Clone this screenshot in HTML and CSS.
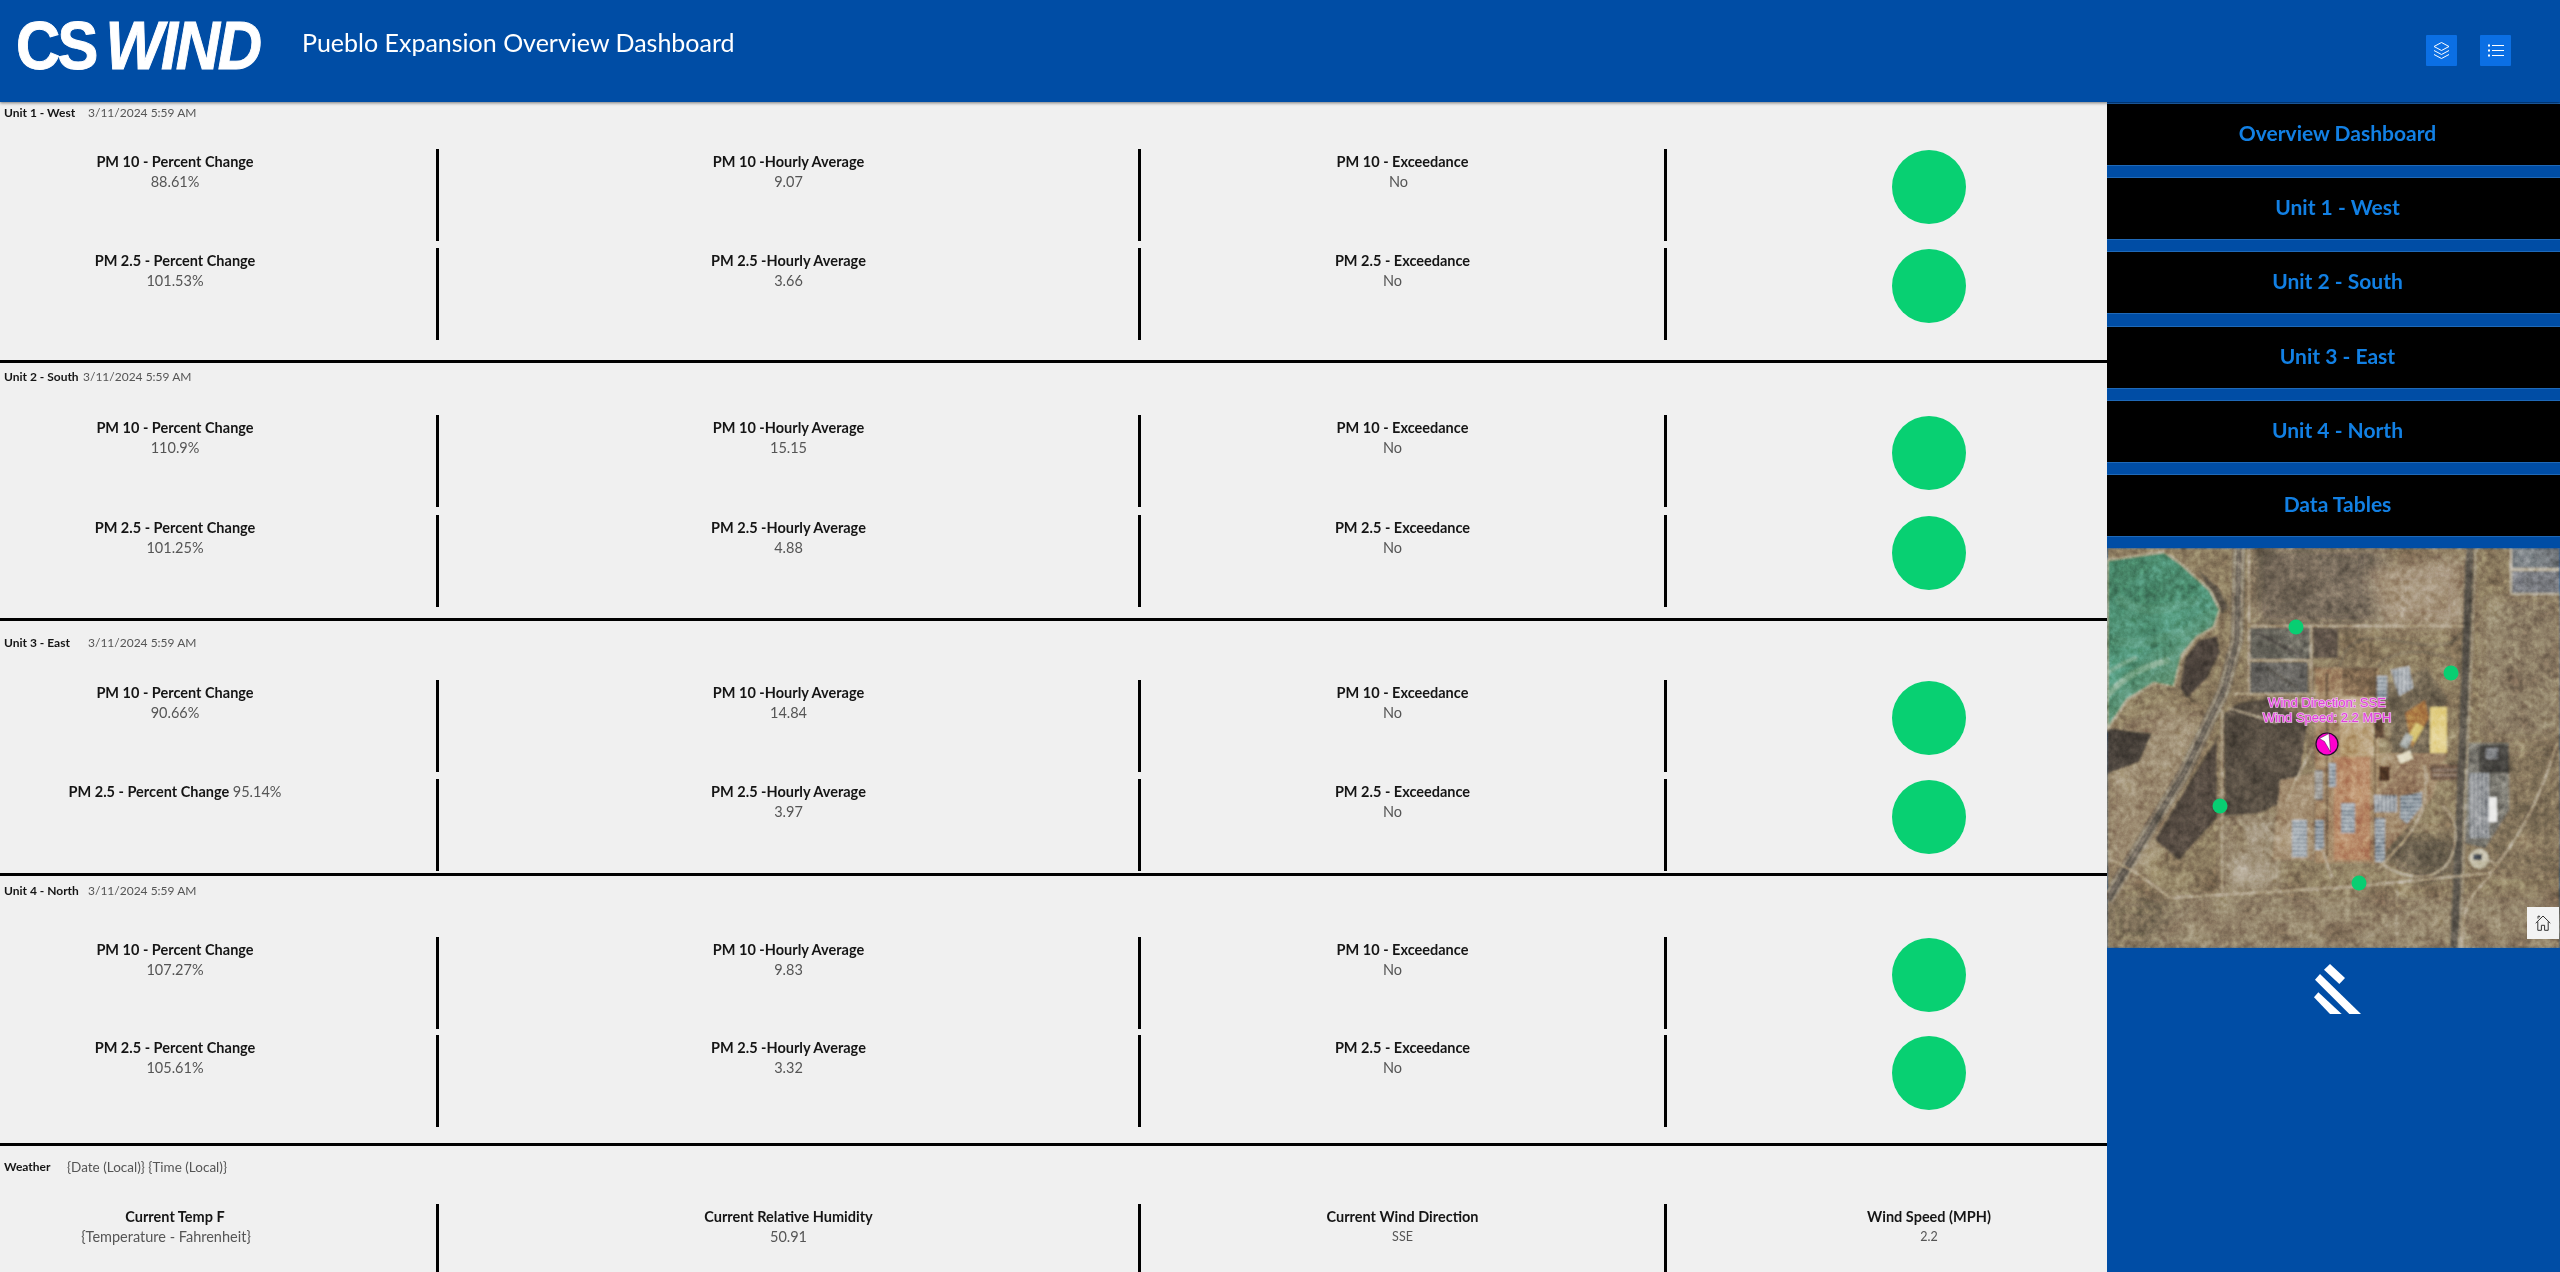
FILE: index.html
```html
<!DOCTYPE html>
<html>
<head>
<title>Pueblo Expansion Overview Dashboard</title>
<meta http-equiv="content-type" content="text/html; charset=utf-8">
<link rel="stylesheet" href="styles.css">
</head>
<body>

<header class="topbar">
	<div class="logo"><span class="logo-cs">CS</span><span class="logo-wind">WIND</span></div>
	<div class="app-title">Pueblo Expansion Overview Dashboard</div>
	<div class="top-actions">
		<button class="top-btn" type="button">
			<svg viewBox="0 0 31 31" width="31" height="31" fill="none" stroke="#fff" stroke-width="1">
				<path d="M8 11.5 15.5 7.5 23 11.5 15.5 15.5Z"/>
				<path d="M8 15.5 15.5 19.5 23 15.5"/>
				<path d="M8 19.5 15.5 23.5 23 19.5"/>
			</svg>
		</button>
		<button class="top-btn" type="button">
			<svg viewBox="0 0 31 31" width="31" height="31" fill="none" stroke="#fff" stroke-width="1">
				<path d="M12 10.5H24M12 15.5H24M12 20.5H24"/>
				<path d="M8 9.5h2v2h-2zM8 14.5h2v2h-2zM8 19.5h2v2h-2z" fill="#fff" stroke="none"/>
			</svg>
		</button>
	</div>
</header>

<div class="main">
	<div class="panels">

		<section class="unit u1">
			<div class="unit-head"><b>Unit 1 - West</b><span class="stamp">3/11/2024 5:59 AM</span></div>
			<div class="row">
				<div class="cell first"><h4>PM 10 - Percent Change</h4><p>88.61%</p></div>
				<div class="cell"><h4>PM 10 -Hourly Average</h4><p>9.07</p></div>
				<div class="cell"><h4>PM 10 - Exceedance</h4><p class="no-a">No</p></div>
				<div class="cell last"><span class="dot"></span></div>
			</div>
			<div class="row">
				<div class="cell first"><h4>PM 2.5 - Percent Change</h4><p>101.53%</p></div>
				<div class="cell"><h4>PM 2.5 -Hourly Average</h4><p>3.66</p></div>
				<div class="cell"><h4>PM 2.5 - Exceedance</h4><p class="no-b">No</p></div>
				<div class="cell last"><span class="dot"></span></div>
			</div>
		</section>

		<section class="unit u2">
			<div class="unit-head"><b>Unit 2 - South</b><span class="stamp">3/11/2024 5:59 AM</span></div>
			<div class="row">
				<div class="cell first"><h4>PM 10 - Percent Change</h4><p>110.9%</p></div>
				<div class="cell"><h4>PM 10 -Hourly Average</h4><p>15.15</p></div>
				<div class="cell"><h4>PM 10 - Exceedance</h4><p class="no-b">No</p></div>
				<div class="cell last"><span class="dot"></span></div>
			</div>
			<div class="row">
				<div class="cell first"><h4>PM 2.5 - Percent Change</h4><p>101.25%</p></div>
				<div class="cell"><h4>PM 2.5 -Hourly Average</h4><p>4.88</p></div>
				<div class="cell"><h4>PM 2.5 - Exceedance</h4><p class="no-b">No</p></div>
				<div class="cell last"><span class="dot"></span></div>
			</div>
		</section>

		<section class="unit u3">
			<div class="unit-head"><b>Unit 3 - East</b><span class="stamp">3/11/2024 5:59 AM</span></div>
			<div class="row">
				<div class="cell first"><h4>PM 10 - Percent Change</h4><p>90.66%</p></div>
				<div class="cell"><h4>PM 10 -Hourly Average</h4><p>14.84</p></div>
				<div class="cell"><h4>PM 10 - Exceedance</h4><p class="no-b">No</p></div>
				<div class="cell last"><span class="dot"></span></div>
			</div>
			<div class="row">
				<div class="cell first"><h4>PM 2.5 - Percent Change <span>95.14%</span></h4></div>
				<div class="cell"><h4>PM 2.5 -Hourly Average</h4><p>3.97</p></div>
				<div class="cell"><h4>PM 2.5 - Exceedance</h4><p class="no-b">No</p></div>
				<div class="cell last"><span class="dot"></span></div>
			</div>
		</section>

		<section class="unit u4">
			<div class="unit-head"><b>Unit 4 - North</b><span class="stamp">3/11/2024 5:59 AM</span></div>
			<div class="row">
				<div class="cell first"><h4>PM 10 - Percent Change</h4><p>107.27%</p></div>
				<div class="cell"><h4>PM 10 -Hourly Average</h4><p>9.83</p></div>
				<div class="cell"><h4>PM 10 - Exceedance</h4><p class="no-b">No</p></div>
				<div class="cell last"><span class="dot"></span></div>
			</div>
			<div class="row">
				<div class="cell first"><h4>PM 2.5 - Percent Change</h4><p>105.61%</p></div>
				<div class="cell"><h4>PM 2.5 -Hourly Average</h4><p>3.32</p></div>
				<div class="cell"><h4>PM 2.5 - Exceedance</h4><p class="no-b">No</p></div>
				<div class="cell last"><span class="dot"></span></div>
			</div>
		</section>

		<section class="unit u5">
			<div class="unit-head"><b>Weather</b><span class="stamp">{Date (Local)} {Time (Local)}</span></div>
			<div class="row">
				<div class="cell first"><h4>Current Temp F</h4><p class="tpl">{Temperature - Fahrenheit}</p></div>
				<div class="cell"><h4>Current Relative Humidity</h4><p>50.91</p></div>
				<div class="cell"><h4>Current Wind Direction</h4><p class="small">SSE</p></div>
				<div class="cell last"><h4>Wind Speed (MPH)</h4><p class="small">2.2</p></div>
			</div>
		</section>

	</div>

	<aside class="side">
		<nav class="side-nav">
			<a>Overview Dashboard</a>
			<a>Unit 1 - West</a>
			<a>Unit 2 - South</a>
			<a>Unit 3 - East</a>
			<a>Unit 4 - North</a>
			<a>Data Tables</a>
		</nav>

		<div class="map">
			<svg class="map-img" viewBox="0 0 453 400" width="453" height="400">
				<defs>
					<filter id="soft" x="-2%" y="-2%" width="104%" height="104%"><feGaussianBlur stdDeviation="0.9"/></filter>
					<filter id="softer"><feGaussianBlur stdDeviation="7"/></filter>
					<filter id="speckle" x="0" y="0" width="100%" height="100%" color-interpolation-filters="sRGB">
						<feTurbulence type="fractalNoise" baseFrequency="0.16" numOctaves="4" seed="7"/>
						<feColorMatrix type="matrix" values="1 1 0 0 -0.5  1 1 0 0 -0.5  1 1 0 0 -0.5  0 0 0 0 1"/>
					</filter>
					<filter id="patches" x="0" y="0" width="100%" height="100%" color-interpolation-filters="sRGB">
						<feTurbulence type="fractalNoise" baseFrequency="0.035" numOctaves="3" seed="21"/>
						<feColorMatrix type="matrix" values="1 1 0 0 -0.5  1 1 0 0 -0.5  1 1 0 0 -0.5  0 0 0 0 1"/>
					</filter>
					<linearGradient id="lake" x1="0.1" y1="0" x2="0.6" y2="1">
						<stop offset="0" stop-color="#4a8a6c"/>
						<stop offset="0.55" stop-color="#4f9074"/>
						<stop offset="1" stop-color="#86a98e"/>
					</linearGradient>
					<pattern id="rows" width="6" height="4" patternUnits="userSpaceOnUse">
						<rect width="6" height="4" fill="#78818a"/>
						<rect width="6" height="2" fill="#bcc5cc"/>
					</pattern>
					<pattern id="rowsv" width="4" height="6" patternUnits="userSpaceOnUse">
						<rect width="4" height="6" fill="#7a8086"/>
						<rect width="2" height="6" fill="#b9c0c6"/>
					</pattern>
				</defs>

				<g filter="url(#soft)">
					<rect width="453" height="400" fill="#8c7b60"/>

					<!-- ground tones -->
					<g filter="url(#softer)">
						<rect x="150" y="0" width="130" height="76" fill="#75695a"/>
						<path d="M260 20 357 10V78H275Z" fill="#a5937a"/>
						<rect x="0" y="350" width="453" height="50" fill="#93836a"/>
						<rect x="375" y="200" width="78" height="120" fill="#7f7059"/>
						<rect x="375" y="50" width="78" height="140" fill="#8d7e66"/>
						<path d="M0 190 60 160 100 170 60 290 20 340 0 320Z" fill="#9b8a70"/>
						<path d="M120 270 170 270 170 340 120 340Z" fill="#a59780"/>
						<path d="M280 290 350 290 350 330 290 330Z" fill="#6a604f"/>
						<path d="M0 350 70 355 40 400 0 400Z" fill="#7c6e58"/>
					</g>

					<!-- dark scrub -->
					<path d="M117 165 132 155 165 150 200 178 193 225 180 252 153 265 118 268Z" fill="#574e42"/>
					<path d="M110 190 110 270 72 312 48 292 88 225Z" fill="#534a3f"/>
					<path d="M110 88 113 105 100 130 80 150 73 140 78 110 92 92Z" fill="#4b433b"/>
					<path d="M0 180 45 186 32 214 0 226Z" fill="#4a433a"/>
					<path d="M92 22 112 40 122 60 112 66 100 42Z" fill="#5a5144"/>
					<path d="M150 5 205 0 225 40 160 60Z" fill="#6f6454" opacity=".7"/>

					<!-- lake -->
					<path d="M0 12 57 4 73 15 103 42 113 62 107 79 90 89 75 107 67 139 47 135 20 152 0 182Z" fill="url(#lake)" stroke="#b9ac90" stroke-width="2"/>
					<path d="M0 148C20 125 40 118 62 112" fill="none" stroke="#a9c2a5" stroke-width="6" opacity=".5"/>
					<path d="M10 50C40 70 60 60 92 52M5 92C35 100 55 90 82 82" fill="none" stroke="#63a083" stroke-width="9" opacity=".45"/>
					<path d="M0 125C12 118 20 112 30 110" fill="none" stroke="#a9c2a5" stroke-width="4" opacity=".4"/>

					<!-- fields -->
					<rect x="143" y="80" width="60" height="31" fill="#6b675f"/>
					<rect x="143" y="114" width="58" height="31" fill="#62605b"/>
					<rect x="206" y="80" width="25" height="30" fill="#62564b"/>
					<path d="M150 85 195 108M160 120 190 140" stroke="#56534d" stroke-width="3" fill="none"/>

					<!-- site -->
					<rect x="208" y="120" width="64" height="195" fill="#a58a6b"/>
					<rect x="235" y="120" width="35" height="29" fill="#7f6750"/>
					<rect x="233" y="149" width="34" height="60" fill="#bda682"/>
					<rect x="227" y="209" width="36" height="103" fill="#b98b69"/>
					<path d="M173 232 207 225V312H165Z" fill="#a69174"/>
					<path d="M272 205 340 205 325 250 290 290 272 312Z" fill="#9d8467"/>
					<path d="M280 135 320 120 340 150 322 205 285 205Z" fill="#766a56"/>
					<path d="M298 165 318 152 322 170 305 200Z" fill="#b5793f" opacity=".8"/>
					<path d="M220 125V310M268 120V310" stroke="#6d5a45" stroke-width="2" fill="none"/>
					<rect x="272" y="218" width="11" height="15" fill="#4a3122"/>
					<rect x="268" y="172" width="9" height="18" fill="#574330"/>

					<!-- roofs -->
					<rect x="323" y="159" width="17" height="46" fill="#e4d28e"/>
					<rect x="185" y="272" width="15" height="37" fill="url(#rows)"/>
					<rect x="267" y="247" width="23" height="17" fill="url(#rowsv)"/>
					<path d="M293 248 315 244V258L300 276 293 270Z" fill="url(#rows)"/>
					<rect x="270" y="128" width="10" height="24" fill="url(#rows)"/>
					<path d="M284 122 302 118 306 140 292 148Z" fill="url(#rowsv)"/>
					<rect x="222" y="215" width="7" height="24" fill="url(#rows)"/>
					<rect x="208" y="272" width="9" height="30" fill="url(#rows)"/>
					<rect x="234" y="255" width="14" height="30" fill="url(#rows)"/>
					<rect x="268" y="270" width="10" height="44" fill="url(#rows)"/>
					<rect x="208" y="222" width="8" height="30" fill="url(#rows)" opacity=".7"/>
					<rect x="291" y="205" width="14" height="9" fill="#e5dfc8" transform="rotate(-25 297 209)"/>
					<rect x="304" y="175" width="9" height="18" fill="#d9c674" transform="rotate(30 308 184)"/>
					<rect x="296" y="186" width="8" height="14" fill="#aab0ae" transform="rotate(30 300 192)"/>
					<rect x="323" y="216" width="28" height="16" fill="#6f5a4a"/>
					<path d="M326 222H350M326 227H350" stroke="#b6a899" stroke-width="1"/>

					<!-- plant on the east side -->
					<path d="M360 195 402 195V262L378 300 358 295Z" fill="#7f7d75"/>
					<path d="M362 225H382V290H362Z" fill="url(#rowsv)" opacity=".75"/>
					<rect x="372" y="197" width="30" height="28" fill="#4c4a45"/>
					<rect x="379" y="200" width="12" height="11" fill="#8e9093"/>
					<rect x="382" y="249" width="8" height="25" fill="#ececeb"/>
					<circle cx="372" cy="311" r="10" fill="#c6c0aa"/>
					<rect x="366" y="306" width="9" height="6" fill="#454b52"/>

					<!-- solar at top right -->
					<rect x="403" y="0" width="50" height="47" fill="#c1b8a5"/>
					<rect x="405" y="0" width="48" height="20" fill="#777b80"/>
					<rect x="405" y="23" width="48" height="22" fill="#74777c"/>

					<!-- highways -->
					<path d="M132 0 130 92 117 142 77 225 0 352" fill="none" stroke="#5e5850" stroke-width="12"/>
					<path d="M128 0 126 92 113 141 73 224 0 344" fill="none" stroke="#a89c86" stroke-width="2"/>
					<path d="M136 0 134 92 121 143 81 226 4 356" fill="none" stroke="#a89c86" stroke-width="2"/>
					<path d="M132 0 130 92 117 142 77 225 0 352" fill="none" stroke="#8a8072" stroke-width="1.5"/>
					<path d="M363 0 353 259 347 400" fill="none" stroke="#5c564e" stroke-width="8"/>
					<path d="M369 0 358 259 353 400" fill="none" stroke="#a39882" stroke-width="2"/>

					<!-- dirt roads -->
					<g fill="none" stroke="#b9ab92" stroke-width="1.8">
						<path d="M140 78H357"/>
						<path d="M142 0V146"/>
						<path d="M204 78V146"/>
						<path d="M143 112H204"/>
						<path d="M127 146H208"/>
						<path d="M115 162V345"/>
						<path d="M122 160 170 175"/>
						<path d="M30 325 63 350 243 339 383 325 390 319 383 312" stroke-width="2.2"/>
						<path d="M0 310 30 325" stroke-width="2.2"/>
						<path d="M233 119C238 88 262 88 287 92S343 105 353 85" stroke="#7f735e"/>
						<path d="M270 120C285 100 320 100 345 112" stroke="#7f735e"/>
						<path d="M318 217C325 270 300 290 270 322" stroke-width="2.4"/>
						<path d="M274 315C300 335 340 335 347 300 352 280 345 265 335 258" stroke-width="2"/>
						<path d="M390 316C420 280 440 230 450 195" stroke-width="2"/>
						<path d="M384 326C370 345 355 345 355 400" stroke-width="2"/>
						<path d="M180 252C190 225 200 215 205 200"/>
						<path d="M225 330 215 300"/>
						<path d="M290 340V400M240 400 330 350" stroke="#a2957c"/>
						<path d="M60 380 100 345" stroke="#a2957c"/>
					</g>
				</g>

				<!-- texture -->
				<rect class="map-noise" width="453" height="400" filter="url(#patches)" opacity=".22"/>
				<rect class="map-noise" width="453" height="400" filter="url(#speckle)" opacity=".22"/>

				<!-- sensors -->
				<g fill="#08ce72">
					<circle cx="189" cy="79" r="7.5"/>
					<circle cx="344" cy="125" r="7.5"/>
					<circle cx="113" cy="258" r="7.5"/>
					<circle cx="252" cy="335" r="7.5"/>
				</g>

				<!-- wind -->
				<g class="wind-label">
					<text x="220" y="159">Wind Direction: SSE</text>
					<text x="220" y="174">Wind Speed: 2.2 MPH</text>
				</g>
				<g transform="translate(220 196)">
					<circle r="11" fill="#ff00cf" stroke="#250a2c" stroke-width="1.2"/>
					<path d="M-7.5-5.5 2-10.5 3.5 8-2.5-2.5Z" fill="#fff" stroke="#3a1a3e" stroke-width=".5"/>
				</g>
			</svg>
			<button class="home-btn" type="button">
				<svg viewBox="0 0 16 16" width="16" height="16" fill="none" stroke="#333" stroke-width="1">
					<path d="M.7 8.2 8 1l7.3 7.2M2.8 6.5v8.8h3.6v-5h3.2v5h3.6V6.5M3 3.6V1.2h1.6v1"/>
				</svg>
			</button>
		</div>

		<div class="side-foot">
			<svg viewBox="642 1273 141 150" width="47" height="50" fill="#fff">
				<path d="M690 1273 735 1315 718 1333 672 1290Z"/>
				<path d="M660 1303 783 1423H748L645 1320Z"/>
				<path d="M655 1358 725 1423H690L642 1373Z"/>
			</svg>
		</div>
	</aside>
</div>

</body>
</html>
```

FILE: styles.css
```css
html, body {
	margin: 0;
	height: 100%;
	overflow: hidden;
}

body {
	display: flex;
	flex-direction: column;
	color: #151515;
	font-family: Lato, "Open Sans", sans-serif;
	background: #f0f0f0;
}

/* top bar */

.topbar {
	display: flex;
	align-items: flex-start;
	flex: 0 0 102px;
	background: #004da5;
	box-shadow: 0 1px 3px rgba(0, 0, 0, 0.5);
	position: relative;
	z-index: 2;
}

.logo {
	display: flex;
	flex: 0 0 286px;
	margin: 9px 0 0 16px;
	color: #fff;
	font-family: "Liberation Sans", sans-serif;
	font-size: 68px;
	font-weight: bold;
	line-height: 72px;
	letter-spacing: -3px;
	-webkit-text-stroke: 1px #fff;
	transform: scaleX(0.9);
	transform-origin: left center;
}

.logo-wind {
	margin-left: 11px;
	font-style: italic;
	letter-spacing: -2.5px;
}

.app-title {
	margin-top: 25px;
	color: #fff;
	font-size: 25px;
	line-height: 34px;
}

.top-actions {
	display: flex;
	gap: 23px;
	margin: 35px 49px 0 auto;
}

.top-btn {
	padding: 0;
	width: 31px;
	height: 31px;
	border: 0;
	border-radius: 1px;
	background: #0b6fe4;
}

/* main */

.main {
	display: flex;
	flex: 1;
	min-height: 0;
}

.panels {
	flex: 0 0 2107px;
	overflow: hidden;
}

.unit {
	box-sizing: border-box;
	border-bottom: 3px solid #000;
}

.u1 { height: 261px; padding-top: 3px; }
.u2 { height: 258px; padding-top: 6px; }
.u3 { height: 255px; padding-top: 14px; }
.u4 { height: 270px; padding-top: 7px; }
.u5 { height: 126px; padding-top: 13px; border-bottom: 0; }

.unit-head {
	display: flex;
	padding-left: 4px;
	height: 16px;
	font-size: 12px;
	line-height: 16px;
}

.unit-head b {
	min-width: 84px;
}

.u2 .unit-head b {
	min-width: 79px;
}

.u5 .unit-head b {
	min-width: 63px;
}

.stamp {
	color: #555;
}

.u5 .stamp {
	font-size: 13.5px;
}

.row {
	display: grid;
	grid-template-columns: 436px 702px 526px 1fr;
	height: 92px;
	margin-top: 7px;
}

.unit-head + .row { margin-top: 28px; }
.u2 .unit-head + .row { margin-top: 30px; }
.u2 .row + .row { margin-top: 8px; }
.u3 .unit-head + .row { margin-top: 29px; }
.u4 .unit-head + .row { margin-top: 38px; }
.u4 .row + .row { margin-top: 6px; }
.u5 .unit-head + .row { margin-top: 29px; height: 68px; }

.cell {
	display: flex;
	flex-direction: column;
	align-items: center;
	box-sizing: border-box;
	padding-top: 3px;
	border-left: 3px solid #000;
	text-align: center;
}

.cell.first {
	border-left: 0;
	padding-right: 86px;
}

.cell.last {
	padding-left: 84px;
}

.cell h4 {
	margin: 0;
	font-size: 14.5px;
	font-weight: 700;
	line-height: 20px;
}

.cell h4 span {
	color: #555;
	font-weight: 400;
}

.cell p {
	margin: 0;
	color: #555;
	font-size: 14.5px;
	line-height: 20px;
}

.cell .no-a { padding-right: 8px; }
.cell .no-b { padding-right: 20px; }
.cell .tpl { padding-right: 18px; }
.cell .small { font-size: 12.5px; }

.dot {
	margin-top: -2px;
	width: 74px;
	height: 74px;
	border-radius: 50%;
	background: #08d072;
}

/* right column */

.side {
	display: flex;
	flex-direction: column;
	flex: 1;
	background: #004da5;
}

.side-nav {
	display: flex;
	flex-direction: column;
	gap: 11.2px;
	padding: 1px 0 11px;
}

.side-nav a {
	box-sizing: border-box;
	padding-left: 8px;
	height: 63px;
	border-top: 1px solid #1f69b8;
	border-bottom: 1px solid #1f69b8;
	color: #1280e4;
	font-size: 21px;
	font-weight: 700;
	line-height: 58px;
	text-align: center;
	background: #000;
}

.map {
	flex: 0 0 400px;
	position: relative;
	overflow: hidden;
}

.map-img {
	display: block;
}

.map-noise {
	mix-blend-mode: overlay;
}

.wind-label text {
	fill: #e23fdc;
	stroke: #e8c0e4;
	stroke-width: 1.5px;
	paint-order: stroke;
	font-family: "Liberation Sans", sans-serif;
	font-size: 13px;
	text-anchor: middle;
}

.home-btn {
	display: flex;
	align-items: center;
	justify-content: center;
	padding: 0;
	width: 32px;
	height: 32px;
	border: 0;
	background: #f3f3f3;
	position: absolute;
	right: 1px;
	bottom: 9px;
}

.side-foot {
	display: flex;
	justify-content: center;
	padding: 16px 0 0 8px;
}
```
